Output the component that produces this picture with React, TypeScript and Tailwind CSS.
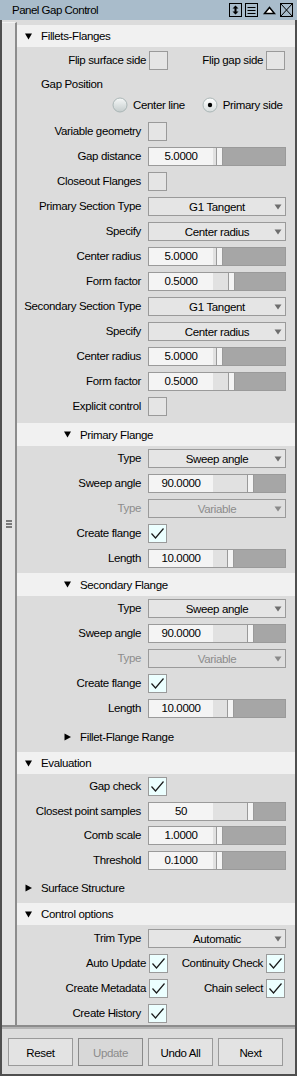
import React from 'react';
import clsx from 'clsx';

type RowProps = {
  label: string;
  disabled?: boolean;
  h?: string;
  children?: React.ReactNode;
};

// 見出しの三角
const Tri = ({ open }: { open: boolean }) =>
  open ? (
    <svg width="7" height="7" viewBox="0 0 7 7">
      <path d="M0 0.5H7L3.5 6.5Z" fill="#000" />
    </svg>
  ) : (
    <svg width="7" height="8" viewBox="0 0 7 8">
      <path d="M0.5 0.5L7 4L0.5 7.5Z" fill="#000" />
    </svg>
  );

const Header = ({
  title,
  open = true,
  indent = false,
  className,
}: {
  title: string;
  open?: boolean;
  indent?: boolean;
  className?: string;
}) => (
  <div
    className={clsx(
      'flex items-center',
      open && 'bg-[#f1f1f1]',
      indent ? 'pl-[47px]' : 'pl-[8px]',
      className,
    )}
  >
    <span className="flex w-[16px] items-center">
      <Tri open={open} />
    </span>
    <span className="pt-[2px]">{title}</span>
  </div>
);

const Row = ({ label, disabled, h = 'h-[25px]', children }: RowProps) => (
  <div className={clsx('flex items-center', h)}>
    <div className={clsx('w-[124px] pt-[1px] text-right', disabled && 'text-[#8c8c8c]')}>
      {label}
    </div>
    <div className="ml-[7px] flex">{children}</div>
  </div>
);

const Check = ({ checked }: { checked?: boolean }) => (
  <div
    className={clsx(
      'flex h-[19px] w-[19px] items-center justify-center border border-[#9a9a9a]',
      checked ? 'bg-[#ecffff]' : 'bg-[#e5e5e5]',
    )}
  >
    {checked && (
      <svg width="17" height="17" viewBox="0 0 17 17">
        <path d="M2.5 8.5L6.5 13L14.5 3.5" stroke="#1a1a1a" strokeWidth="1.2" fill="none" />
      </svg>
    )}
  </div>
);

const Slider = ({ value, pos }: { value: string; pos: number }) => (
  <div className="flex h-[19px] w-[138px] border border-[#9a9a9a]">
    <div className="flex w-[64px] items-center justify-center bg-[#f4f4f4] pt-[1px]">{value}</div>
    <div className="flex flex-1">
      <div className="bg-[#e1e1e1]" style={{ width: pos }} />
      <div className="w-[7px] border-x border-[#9a9a9a] bg-[#f4f4f4]" />
      <div className="flex-1 bg-[#a6a6a6]" />
    </div>
  </div>
);

const Select = ({ value, disabled }: { value: string; disabled?: boolean }) => (
  <div
    className={clsx(
      'grid h-[19px] w-[138px] grid-cols-[12px_1fr_12px] items-center border border-[#9a9a9a]',
      disabled ? 'bg-[#dedede]' : 'bg-[#e5e5e5]',
    )}
  >
    <span />
    <span className={clsx('pt-[1px] text-center', disabled && 'text-[#8c8c8c]')}>{value}</span>
    <svg width="8" height="6" viewBox="0 0 8 6" className="ml-[1px]">
      <path d="M0.5 0.5H7.5L4 5.5Z" fill={disabled ? '#8a8a8a' : '#6e6e6e'} />
    </svg>
  </div>
);

const Radio = ({ on, id }: { on?: boolean; id: string }) => (
  <svg width="16" height="16" viewBox="0 0 16 16">
    <defs>
      <linearGradient id={id} x1="0" y1="0" x2="0" y2="1">
        <stop offset="0" stopColor={on ? '#ffffff' : '#f6f8f8'} />
        <stop offset="1" stopColor={on ? '#d6dcdc' : '#c4cccc'} />
      </linearGradient>
    </defs>
    <circle cx="8" cy="8" r="7" fill={`url(#${id})`} stroke="#aab6b6" />
    {on && <circle cx="8" cy="8" r="2.2" fill="#000" />}
  </svg>
);

// チェックボックス2つ並びの行
const PairRow = ({
  left,
  right,
  h = 'h-[25px]',
}: {
  left: string;
  right: string;
  h?: string;
}) => (
  <div className={clsx('flex items-center', h)}>
    <div className="flex w-[151px] items-center justify-end gap-[3px]">
      <span className="pt-[1px]">{left}</span>
      <Check checked={left !== 'Flip surface side'} />
    </div>
    <div className="flex flex-1 items-center justify-end gap-[3px] pr-[10px]">
      <span className="pt-[1px]">{right}</span>
      <Check checked={right !== 'Flip gap side'} />
    </div>
  </div>
);

const TitleBar = () => (
  <div className="flex h-[20px] items-center bg-[#a9bccb] pl-[12px] pr-[4px]">
    <span className="flex-1 pt-[2px] tracking-[-0.5px]">Panel Gap Control</span>
    <svg width="13" height="14" viewBox="0 0 13 14">
      <rect x="0.5" y="0.5" width="12" height="13" fill="none" stroke="#000" />
      <path d="M6.5 4V10" stroke="#000" strokeWidth="2" />
      <path d="M3.5 5.5L6.5 2.5L9.5 5.5Z M3.5 8.5L6.5 11.5L9.5 8.5Z" fill="#000" />
    </svg>
    <svg width="13" height="14" viewBox="0 0 13 14" className="ml-[3px]">
      <rect x="0.5" y="0.5" width="12" height="13" fill="none" stroke="#000" />
      <path d="M2.5 4.5H10.5M2.5 7.5H10.5M2.5 10.5H10.5" stroke="#000" />
    </svg>
    <svg width="13" height="14" viewBox="0 0 13 14" className="ml-[5px]">
      <path d="M1.5 10.5L6.5 4.5L11.5 10.5Z" fill="#fff" stroke="#000" strokeWidth="1.5" />
    </svg>
    <svg width="13" height="14" viewBox="0 0 13 14" className="ml-[4px]">
      <rect x="0.5" y="0.5" width="12" height="13" fill="none" stroke="#000" />
      <path d="M1 1L12 13M12 1L1 13" stroke="#000" />
    </svg>
  </div>
);

const App = () => {
  const buttons = ['Reset', 'Update', 'Undo All', 'Next'];

  return (
    <div className="flex h-[1076px] w-[297px] flex-col overflow-hidden bg-[#dcdcdc] font-['Liberation_Sans',Arial,sans-serif] text-[11.5px] tracking-[-0.35px] text-black">
      <TitleBar />
      <div className="flex flex-1 flex-col border-x-2 border-b-2 border-[#4f4f4f]">
        <div className="flex h-[1005px]">
          {/* 左のハンドル */}
          <div className="mt-[2px] flex w-[15px] items-center justify-center border-r-2 border-t border-[#8c8c8c] border-t-[#f2f2f2] bg-[#e4e4e4]">
            <div className="flex flex-col gap-[1px]">
              <div className="h-[2px] w-[6px] bg-[#7a7a7a]" />
              <div className="h-[2px] w-[6px] bg-[#7a7a7a]" />
              <div className="h-[2px] w-[6px] bg-[#7a7a7a]" />
            </div>
          </div>

          <div className="flex flex-1 flex-col overflow-hidden pt-[5px]">
            <Header title="Fillets-Flanges" className="h-[22px]" />
            <PairRow left="Flip surface side" right="Flip gap side" h="h-[26px]" />
            <div className="flex h-[22px] items-center pl-[24px] pt-[2px]">Gap Position</div>
            <div className="flex h-[24px] items-center pb-[4px] pl-[95px]">
              <Radio id="r1" />
              <span className="ml-[5px] pt-[1px]">Center line</span>
              <span className="ml-[17px] flex">
                <Radio id="r2" on />
              </span>
              <span className="ml-[5px] pt-[1px]">Primary side</span>
            </div>
            <Row label="Variable geometry">
              <Check />
            </Row>
            <Row label="Gap distance">
              <Slider value="5.0000" pos={3} />
            </Row>
            <Row label="Closeout Flanges">
              <Check />
            </Row>
            <Row label="Primary Section Type">
              <Select value="G1 Tangent" />
            </Row>
            <Row label="Specify">
              <Select value="Center radius" />
            </Row>
            <Row label="Center radius">
              <Slider value="5.0000" pos={3} />
            </Row>
            <Row label="Form factor">
              <Slider value="0.5000" pos={15} />
            </Row>
            <Row label="Secondary Section Type">
              <Select value="G1 Tangent" />
            </Row>
            <Row label="Specify">
              <Select value="Center radius" />
            </Row>
            <Row label="Center radius">
              <Slider value="5.0000" pos={3} />
            </Row>
            <Row label="Form factor">
              <Slider value="0.5000" pos={15} />
            </Row>
            <Row label="Explicit control">
              <Check />
            </Row>

            <Header title="Primary Flange" indent className="mt-[4px] h-[23px]" />
            <Row label="Type">
              <Select value="Sweep angle" />
            </Row>
            <Row label="Sweep angle">
              <Slider value="90.0000" pos={34} />
            </Row>
            <Row label="Type" disabled>
              <Select value="Variable" disabled />
            </Row>
            <Row label="Create flange">
              <Check checked />
            </Row>
            <Row label="Length">
              <Slider value="10.0000" pos={14} />
            </Row>

            <Header title="Secondary Flange" indent className="mt-[2px] h-[23px]" />
            <Row label="Type">
              <Select value="Sweep angle" />
            </Row>
            <Row label="Sweep angle">
              <Slider value="90.0000" pos={34} />
            </Row>
            <Row label="Type" disabled>
              <Select value="Variable" disabled />
            </Row>
            <Row label="Create flange">
              <Check checked />
            </Row>
            <Row label="Length">
              <Slider value="10.0000" pos={14} />
            </Row>

            <Header title="Fillet-Flange Range" open={false} indent className="mt-[3px] h-[26px]" />

            <Header title="Evaluation" className="mt-[2px] h-[22px]" />
            <Row label="Gap check">
              <Check checked />
            </Row>
            <Row label="Closest point samples" h="h-[24px]">
              <Slider value="50" pos={34} />
            </Row>
            <Row label="Comb scale">
              <Slider value="1.0000" pos={3} />
            </Row>
            <Row label="Threshold">
              <Slider value="0.1000" pos={3} />
            </Row>

            <Header title="Surface Structure" open={false} className="mt-[2px] h-[26px]" />

            <Header title="Control options" className="mt-[2px] h-[22px]" />
            <Row label="Trim Type" h="mt-[1px] h-[25px]">
              <Select value="Automatic" />
            </Row>
            <PairRow left="Auto Update" right="Continuity Check" />
            <PairRow left="Create Metadata" right="Chain select" />
            <Row label="Create History" h="h-[24px]">
              <Check checked />
            </Row>
          </div>
        </div>

        {/* 区切り線 */}
        <div className="h-[2px] bg-[#8c8c8c]" />
        <div className="h-[2px] bg-[#b4b4b4]" />

        <div className="flex gap-[5px] pl-[6px] pt-[9px]">
          {buttons.map((b) => (
            <div
              key={b}
              className={clsx(
                'flex h-[28px] w-[65px] items-center justify-center border pt-[3px]',
                b === 'Update'
                  ? 'border-[#8a8a8a] bg-[#d8d8d8] text-[#8c8c8c]'
                  : 'border-[#9a9a9a] bg-[#e3e3e3]',
              )}
            >
              {b}
            </div>
          ))}
        </div>
      </div>
    </div>
  );
};

export default App;
